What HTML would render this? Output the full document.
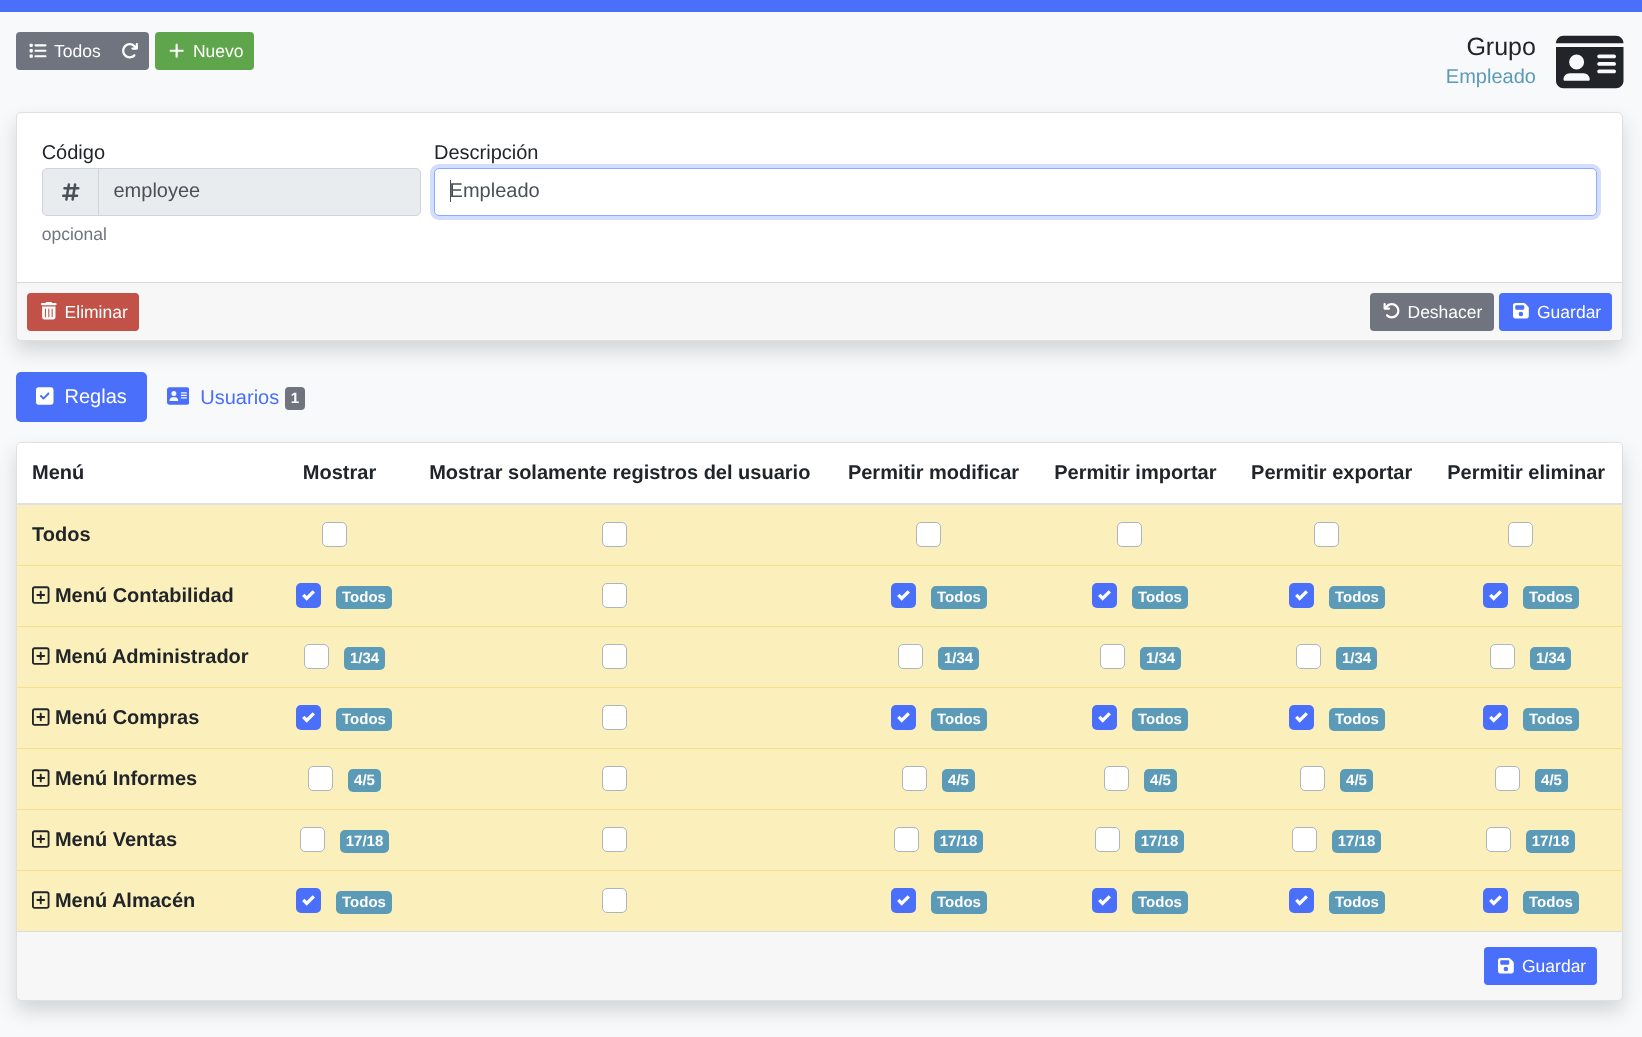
<!DOCTYPE html>
<html><head><meta charset="utf-8"><title>Grupo</title>
<style>
html,body{margin:0;padding:0}
body{width:1642px;height:1037px;position:relative;overflow:hidden;background:#f8f9fa;font-family:"Liberation Sans",sans-serif}
</style></head><body>
<div style="position:absolute;left:0px;top:0px;width:1642px;height:12px;background:#4a6ffa;border-radius:0px;"></div>
<div style="position:absolute;left:16px;top:32px;width:133px;height:38px;background:#6f747e;border-radius:4px;"></div>
<svg style="position:absolute;left:29.05px;top:42.06px;width:17.500px;height:17.5px" viewBox="0 0 512 512"><path fill="#fff" d="M40 48C26.7 48 16 58.7 16 72v48c0 13.3 10.7 24 24 24H88c13.3 0 24-10.7 24-24V72c0-13.3-10.7-24-24-24H40zM192 64c-17.7 0-32 14.3-32 32s14.3 32 32 32H480c17.7 0 32-14.3 32-32s-14.3-32-32-32H192zm0 160c-17.7 0-32 14.3-32 32s14.3 32 32 32H480c17.7 0 32-14.3 32-32s-14.3-32-32-32H192zm0 160c-17.7 0-32 14.3-32 32s14.3 32 32 32H480c17.7 0 32-14.3 32-32s-14.3-32-32-32H192zM16 232v48c0 13.3 10.7 24 24 24H88c13.3 0 24-10.7 24-24V232c0-13.3-10.7-24-24-24H40c-13.3 0-24 10.7-24 24zM40 368c-13.3 0-24 10.7-24 24v48c0 13.3 10.7 24 24 24H88c13.3 0 24-10.7 24-24V392c0-13.3-10.7-24-24-24H40z"/></svg>
<svg style="position:absolute;left:121.0px;top:42.0px;width:17.500px;height:17.5px" viewBox="0 0 512 512"><path fill="#fff" d="M386.3 160H336c-17.7 0-32 14.3-32 32s14.3 32 32 32H464c17.7 0 32-14.3 32-32V64c0-17.7-14.3-32-32-32s-32 14.3-32 32v51.2L414.4 97.6c-87.5-87.5-229.3-87.5-316.8 0s-87.5 229.3 0 316.8s229.3 87.5 316.8 0c12.5-12.5 12.5-32.8 0-45.3s-32.8-12.5-45.3 0c-62.5 62.5-163.8 62.5-226.3 0s-62.5-163.8 0-226.3s163.8-62.5 226.3 0L386.3 160z"/></svg>
<div style="position:absolute;left:155px;top:32px;width:99px;height:38px;background:#5fa54b;border-radius:4px;"></div>
<svg style="position:absolute;left:169.25px;top:42.2px;width:15.312px;height:17.5px" viewBox="0 0 448 512"><path fill="#fff" d="M256 80c0-17.7-14.3-32-32-32s-32 14.3-32 32V224H48c-17.7 0-32 14.3-32 32s14.3 32 32 32H192V432c0 17.7 14.3 32 32 32s32-14.3 32-32V288H400c17.7 0 32-14.3 32-32s-14.3-32-32-32H256V80z"/></svg>
<svg style="position:absolute;left:1556px;top:32.05px;width:67.500px;height:60px" viewBox="0 0 576 512"><path fill="#212529" d="M0 96l576 0c0-35.3-28.7-64-64-64H64C28.7 32 0 60.7 0 96zm0 32V416c0 35.3 28.7 64 64 64H512c35.3 0 64-28.7 64-64V128H0zM64 405.3c0-29.5 23.9-53.3 53.3-53.3H234.7c29.5 0 53.3 23.900 53.3 53.3c0 5.9-4.8 10.7-10.7 10.7H74.7c-5.9 0-10.7-4.8-10.7-10.7zM176 192a64 64 0 1 1 0 128 64 64 0 1 1 0-128zm176 16c0-8.8 7.2-16 16-16H496c8.8 0 16 7.2 16 16s-7.2 16-16 16H368c-8.8 0-16-7.2-16-16zm0 64c0-8.8 7.2-16 16-16H496c8.8 0 16 7.2 16 16s-7.2 16-16 16H368c-8.8 0-16-7.2-16-16zm0 64c0-8.8 7.2-16 16-16H496c8.8 0 16 7.2 16 16s-7.2 16-16 16H368c-8.8 0-16-7.2-16-16z"/></svg>
<div style="position:absolute;left:16px;top:112px;width:1605px;height:227px;background:#fff;border:1px solid #dfdfdf;border-radius:5px;box-shadow:0 10px 20px rgba(0,0,0,.15);overflow:hidden"><div style="position:absolute;left:0;top:169px;width:1605px;height:58px;background:#f7f7f7;border-top:1px solid #d8d8d8"></div></div>
<div style="position:absolute;left:42px;top:168px;width:377px;height:46px;background:#e9ecef;border-radius:5px;border:1px solid #ced4da"></div>
<div style="position:absolute;left:98px;top:169px;width:1px;height:46px;background:#ced4da;border-radius:0px;"></div>
<svg style="position:absolute;left:62.0px;top:181.85px;width:17.500px;height:20px" viewBox="0 0 448 512"><path fill="#495057" d="M181.3 32.4c17.4 2.9 29.2 19.4 26.3 36.8L197.8 128h95.1l11.5-69.3c2.9-17.4 19.4-29.2 36.8-26.3s29.2 19.4 26.3 36.8L357.8 128H416c17.7 0 32 14.3 32 32s-14.3 32-32 32H347.1L325.8 320H384c17.7 0 32 14.3 32 32s-14.3 32-32 32H315.1l-11.5 69.3c-2.9 17.4-19.4 29.2-36.8 26.3s-29.2-19.4-26.3-36.8l9.8-58.7H155.1l-11.5 69.3c-2.9 17.4-19.4 29.2-36.8 26.3s-29.2-19.4-26.3-36.8L90.2 384H32c-17.7 0-32-14.3-32-32s14.3-32 32-32H100.9l21.3-128H64c-17.7 0-32-14.3-32-32s14.3-32 32-32h68.9l11.5-69.3c2.9-17.4 19.4-29.2 36.8-26.3zM187.1 192L165.8 320h95.1l21.3-128H187.1z"/></svg>
<div style="position:absolute;left:430px;top:164px;width:1171px;height:56px;background:#d3ddfd;border-radius:9px;"></div>
<div style="position:absolute;left:434px;top:168px;width:1161px;height:46px;background:#fff;border-radius:5px;border:1px solid #8cadfb"></div>
<div style="position:absolute;left:450px;top:180px;width:1px;height:22px;background:#495057;border-radius:0px;"></div>
<div style="position:absolute;left:27px;top:293px;width:112px;height:38px;background:#c25148;border-radius:4px;"></div>
<svg style="position:absolute;left:41.05px;top:302px;width:15.600px;height:17.5px" viewBox="0 0 448 512" preserveAspectRatio="none"><path fill="#fff" d="M135.2 17.7C140.6 6.8 151.7 0 163.8 0H284.2c12.1 0 23.2 6.8 28.6 17.7L320 32h96c17.7 0 32 14.3 32 32s-14.3 32-32 32H32C14.3 96 0 81.7 0 64S14.3 32 32 32h96l7.2-14.3zM32 128H416V448c0 35.3-28.7 64-64 64H96c-35.3 0-64-28.7-64-64V128zm96 64c-8.8 0-16 7.2-16 16V432c0 8.8 7.2 16 16 16s16-7.2 16-16V208c0-8.8-7.2-16-16-16zm96 0c-8.8 0-16 7.2-16 16V432c0 8.8 7.2 16 16 16s16-7.2 16-16V208c0-8.8-7.2-16-16-16zm96 0c-8.8 0-16 7.2-16 16V432c0 8.8 7.2 16 16 16s16-7.2 16-16V208c0-8.8-7.2-16-16-16z"/></svg>
<div style="position:absolute;left:1370px;top:293px;width:124px;height:38px;background:#6f747e;border-radius:4px;"></div>
<svg style="position:absolute;left:1383.25px;top:301.9px;width:17.500px;height:17.5px" viewBox="0 0 512 512"><path fill="#fff" d="M125.7 160H176c17.7 0 32 14.3 32 32s-14.3 32-32 32H48c-17.7 0-32-14.3-32-32V64c0-17.7 14.3-32 32-32s32 14.3 32 32v51.2L97.6 97.6c87.5-87.5 229.3-87.5 316.8 0s87.5 229.3 0 316.8s-229.3 87.5-316.8 0c-12.5-12.5-12.5-32.8 0-45.3s32.8-12.5 45.3 0c62.5 62.5 163.8 62.5 226.3 0s62.5-163.8 0-226.3s-163.8-62.5-226.3 0L125.7 160z"/></svg>
<div style="position:absolute;left:1499px;top:293px;width:113px;height:38px;background:#4a6ffa;border-radius:4px;"></div>
<svg style="position:absolute;left:1513px;top:301.7px;width:15.800px;height:17.5px" viewBox="0 0 448 512" preserveAspectRatio="none"><path fill="#fff" d="M64 32C28.7 32 0 60.7 0 96V416c0 35.3 28.7 64 64 64H384c35.3 0 64-28.7 64-64V173.3c0-17-6.7-33.3-18.7-45.3L352 50.7C340 38.7 323.7 32 306.7 32H64zm0 96c0-17.7 14.3-32 32-32H288c17.7 0 32 14.3 32 32v64c0 17.7-14.3 32-32 32H96c-17.7 0-32-14.3-32-32V128zM224 288a64 64 0 1 1 0 128 64 64 0 1 1 0-128z"/></svg>
<div style="position:absolute;left:16px;top:372px;width:131px;height:50px;background:#4a6ffa;border-radius:5px;"></div>
<svg style="position:absolute;left:36px;top:385.75px;width:17.500px;height:20px" viewBox="0 0 448 512"><path fill="#fff" d="M64 32C28.7 32 0 60.7 0 96V416c0 35.3 28.7 64 64 64H384c35.3 0 64-28.7 64-64V96c0-35.3-28.7-64-64-64H64zM337 209L209 337c-9.4 9.4-24.6 9.4-33.9 0l-64-64c-9.4-9.4-9.4-24.6 0-33.9s24.6-9.4 33.9 0l47 47L303 175c9.4-9.4 24.6-9.4 33.9 0s9.4 24.6 0 33.9z"/></svg>
<svg style="position:absolute;left:166.7px;top:385.75px;width:22.500px;height:20px" viewBox="0 0 576 512"><path fill="#4a6ffa" d="M64 32C28.7 32 0 60.7 0 96V416c0 35.3 28.7 64 64 64H512c35.3 0 64-28.7 64-64V96c0-35.3-28.7-64-64-64H64zm80 256h64c44.2 0 80 35.8 80 80c0 8.8-7.2 16-16 16H80c-8.8 0-16-7.2-16-16c0-44.2 35.8-80 80-80zm-32-96a64 64 0 1 1 128 0 64 64 0 1 1 -128 0zm256-32H496c8.8 0 16 7.2 16 16s-7.2 16-16 16H368c-8.8 0-16-7.2-16-16s7.2-16 16-16zm0 64H496c8.8 0 16 7.2 16 16s-7.2 16-16 16H368c-8.8 0-16-7.2-16-16s7.2-16 16-16zm0 64H496c8.8 0 16 7.2 16 16s-7.2 16-16 16H368c-8.8 0-16-7.2-16-16s7.2-16 16-16z"/></svg>
<div style="position:absolute;left:285px;top:387px;width:20px;height:23px;background:#6f747e;border-radius:4px;"></div>
<div style="position:absolute;left:16px;top:442px;width:1605px;height:557px;background:#f7f7f7;border:1px solid #dfdfdf;border-radius:5px;box-shadow:0 10px 20px rgba(0,0,0,.15);overflow:hidden"><div style="position:absolute;left:0;top:0;width:1605px;height:60px;background:#fff;border-bottom:2px solid #dee2e6"></div><div style="position:absolute;left:0;top:62px;width:1605px;height:60px;background:#fbf0bc;border-bottom:1px solid #f5e08a"></div><div style="position:absolute;left:0;top:123px;width:1605px;height:60px;background:#fbf0bc;border-bottom:1px solid #f5e08a"></div><div style="position:absolute;left:0;top:184px;width:1605px;height:60px;background:#fbf0bc;border-bottom:1px solid #f5e08a"></div><div style="position:absolute;left:0;top:245px;width:1605px;height:60px;background:#fbf0bc;border-bottom:1px solid #f5e08a"></div><div style="position:absolute;left:0;top:306px;width:1605px;height:60px;background:#fbf0bc;border-bottom:1px solid #f5e08a"></div><div style="position:absolute;left:0;top:367px;width:1605px;height:60px;background:#fbf0bc;border-bottom:1px solid #f5e08a"></div><div style="position:absolute;left:0;top:428px;width:1605px;height:60px;background:#fbf0bc;border-bottom:1px solid #d9dadd"></div></div>
<div style="position:absolute;left:322.00px;top:522.00px;width:23px;height:23px;background:#fff;border:1px solid #adb5bd;border-radius:5px"></div>
<div style="position:absolute;left:602.00px;top:522.00px;width:23px;height:23px;background:#fff;border:1px solid #adb5bd;border-radius:5px"></div>
<div style="position:absolute;left:916.00px;top:522.00px;width:23px;height:23px;background:#fff;border:1px solid #adb5bd;border-radius:5px"></div>
<div style="position:absolute;left:1117.00px;top:522.00px;width:23px;height:23px;background:#fff;border:1px solid #adb5bd;border-radius:5px"></div>
<div style="position:absolute;left:1314.00px;top:522.00px;width:23px;height:23px;background:#fff;border:1px solid #adb5bd;border-radius:5px"></div>
<div style="position:absolute;left:1508.00px;top:522.00px;width:23px;height:23px;background:#fff;border:1px solid #adb5bd;border-radius:5px"></div>
<svg style="position:absolute;left:32.2px;top:584.55px;width:17.500px;height:20px" viewBox="0 0 448 512"><path fill="#212529" d="M64 80c-8.8 0-16 7.2-16 16V416c0 8.8 7.2 16 16 16H384c8.8 0 16-7.2 16-16V96c0-8.8-7.2-16-16-16H64zM0 96C0 60.7 28.7 32 64 32H384c35.3 0 64 28.7 64 64V416c0 35.3-28.7 64-64 64H64c-35.3 0-64-28.7-64-64V96zM200 344V280H136c-13.3 0-24-10.7-24-24s10.7-24 24-24h64V168c0-13.3 10.7-24 24-24s24 10.7 24 24v64h64c13.3 0 24 10.7 24 24s-10.7 24-24 24H248v64c0 13.3-10.7 24-24 24s-24-10.7-24-24z"/></svg>
<div style="position:absolute;left:296.00px;top:583.00px;width:25px;height:25px;background:#4a6ffa;border-radius:5px"><svg style="position:absolute;left:0;top:0" width="25" height="25" viewBox="0 0 25 25"><path d="M7.3 11.8L10.7 15.4L17.8 8.3" fill="none" stroke="#fff" stroke-width="3.3"/></svg></div>
<div style="position:absolute;left:336.00px;top:586.00px;width:56.00px;height:22.5px;background:#5b9bb8;border-radius:5px"></div>
<div style="position:absolute;left:602.00px;top:583.00px;width:23px;height:23px;background:#fff;border:1px solid #adb5bd;border-radius:5px"></div>
<div style="position:absolute;left:891.00px;top:583.00px;width:25px;height:25px;background:#4a6ffa;border-radius:5px"><svg style="position:absolute;left:0;top:0" width="25" height="25" viewBox="0 0 25 25"><path d="M7.3 11.8L10.7 15.4L17.8 8.3" fill="none" stroke="#fff" stroke-width="3.3"/></svg></div>
<div style="position:absolute;left:931.00px;top:586.00px;width:56.00px;height:22.5px;background:#5b9bb8;border-radius:5px"></div>
<div style="position:absolute;left:1092.00px;top:583.00px;width:25px;height:25px;background:#4a6ffa;border-radius:5px"><svg style="position:absolute;left:0;top:0" width="25" height="25" viewBox="0 0 25 25"><path d="M7.3 11.8L10.7 15.4L17.8 8.3" fill="none" stroke="#fff" stroke-width="3.3"/></svg></div>
<div style="position:absolute;left:1132.00px;top:586.00px;width:56.00px;height:22.5px;background:#5b9bb8;border-radius:5px"></div>
<div style="position:absolute;left:1289.00px;top:583.00px;width:25px;height:25px;background:#4a6ffa;border-radius:5px"><svg style="position:absolute;left:0;top:0" width="25" height="25" viewBox="0 0 25 25"><path d="M7.3 11.8L10.7 15.4L17.8 8.3" fill="none" stroke="#fff" stroke-width="3.3"/></svg></div>
<div style="position:absolute;left:1329.00px;top:586.00px;width:56.00px;height:22.5px;background:#5b9bb8;border-radius:5px"></div>
<div style="position:absolute;left:1483.00px;top:583.00px;width:25px;height:25px;background:#4a6ffa;border-radius:5px"><svg style="position:absolute;left:0;top:0" width="25" height="25" viewBox="0 0 25 25"><path d="M7.3 11.8L10.7 15.4L17.8 8.3" fill="none" stroke="#fff" stroke-width="3.3"/></svg></div>
<div style="position:absolute;left:1523.00px;top:586.00px;width:56.00px;height:22.5px;background:#5b9bb8;border-radius:5px"></div>
<svg style="position:absolute;left:32.2px;top:645.55px;width:17.500px;height:20px" viewBox="0 0 448 512"><path fill="#212529" d="M64 80c-8.8 0-16 7.2-16 16V416c0 8.8 7.2 16 16 16H384c8.8 0 16-7.2 16-16V96c0-8.8-7.2-16-16-16H64zM0 96C0 60.7 28.7 32 64 32H384c35.3 0 64 28.7 64 64V416c0 35.3-28.7 64-64 64H64c-35.3 0-64-28.7-64-64V96zM200 344V280H136c-13.3 0-24-10.7-24-24s10.7-24 24-24h64V168c0-13.3 10.7-24 24-24s24 10.7 24 24v64h64c13.3 0 24 10.7 24 24s-10.7 24-24 24H248v64c0 13.3-10.7 24-24 24s-24-10.7-24-24z"/></svg>
<div style="position:absolute;left:304.00px;top:644.00px;width:23px;height:23px;background:#fff;border:1px solid #adb5bd;border-radius:5px"></div>
<div style="position:absolute;left:344.00px;top:647.00px;width:41.00px;height:22.5px;background:#5b9bb8;border-radius:5px"></div>
<div style="position:absolute;left:602.00px;top:644.00px;width:23px;height:23px;background:#fff;border:1px solid #adb5bd;border-radius:5px"></div>
<div style="position:absolute;left:898.00px;top:644.00px;width:23px;height:23px;background:#fff;border:1px solid #adb5bd;border-radius:5px"></div>
<div style="position:absolute;left:938.00px;top:647.00px;width:41.00px;height:22.5px;background:#5b9bb8;border-radius:5px"></div>
<div style="position:absolute;left:1100.00px;top:644.00px;width:23px;height:23px;background:#fff;border:1px solid #adb5bd;border-radius:5px"></div>
<div style="position:absolute;left:1140.00px;top:647.00px;width:41.00px;height:22.5px;background:#5b9bb8;border-radius:5px"></div>
<div style="position:absolute;left:1296.00px;top:644.00px;width:23px;height:23px;background:#fff;border:1px solid #adb5bd;border-radius:5px"></div>
<div style="position:absolute;left:1336.00px;top:647.00px;width:41.00px;height:22.5px;background:#5b9bb8;border-radius:5px"></div>
<div style="position:absolute;left:1490.00px;top:644.00px;width:23px;height:23px;background:#fff;border:1px solid #adb5bd;border-radius:5px"></div>
<div style="position:absolute;left:1530.00px;top:647.00px;width:41.00px;height:22.5px;background:#5b9bb8;border-radius:5px"></div>
<svg style="position:absolute;left:32.2px;top:706.55px;width:17.500px;height:20px" viewBox="0 0 448 512"><path fill="#212529" d="M64 80c-8.8 0-16 7.2-16 16V416c0 8.8 7.2 16 16 16H384c8.8 0 16-7.2 16-16V96c0-8.8-7.2-16-16-16H64zM0 96C0 60.7 28.7 32 64 32H384c35.3 0 64 28.7 64 64V416c0 35.3-28.7 64-64 64H64c-35.3 0-64-28.7-64-64V96zM200 344V280H136c-13.3 0-24-10.7-24-24s10.7-24 24-24h64V168c0-13.3 10.7-24 24-24s24 10.7 24 24v64h64c13.3 0 24 10.7 24 24s-10.7 24-24 24H248v64c0 13.3-10.7 24-24 24s-24-10.7-24-24z"/></svg>
<div style="position:absolute;left:296.00px;top:705.00px;width:25px;height:25px;background:#4a6ffa;border-radius:5px"><svg style="position:absolute;left:0;top:0" width="25" height="25" viewBox="0 0 25 25"><path d="M7.3 11.8L10.7 15.4L17.8 8.3" fill="none" stroke="#fff" stroke-width="3.3"/></svg></div>
<div style="position:absolute;left:336.00px;top:708.00px;width:56.00px;height:22.5px;background:#5b9bb8;border-radius:5px"></div>
<div style="position:absolute;left:602.00px;top:705.00px;width:23px;height:23px;background:#fff;border:1px solid #adb5bd;border-radius:5px"></div>
<div style="position:absolute;left:891.00px;top:705.00px;width:25px;height:25px;background:#4a6ffa;border-radius:5px"><svg style="position:absolute;left:0;top:0" width="25" height="25" viewBox="0 0 25 25"><path d="M7.3 11.8L10.7 15.4L17.8 8.3" fill="none" stroke="#fff" stroke-width="3.3"/></svg></div>
<div style="position:absolute;left:931.00px;top:708.00px;width:56.00px;height:22.5px;background:#5b9bb8;border-radius:5px"></div>
<div style="position:absolute;left:1092.00px;top:705.00px;width:25px;height:25px;background:#4a6ffa;border-radius:5px"><svg style="position:absolute;left:0;top:0" width="25" height="25" viewBox="0 0 25 25"><path d="M7.3 11.8L10.7 15.4L17.8 8.3" fill="none" stroke="#fff" stroke-width="3.3"/></svg></div>
<div style="position:absolute;left:1132.00px;top:708.00px;width:56.00px;height:22.5px;background:#5b9bb8;border-radius:5px"></div>
<div style="position:absolute;left:1289.00px;top:705.00px;width:25px;height:25px;background:#4a6ffa;border-radius:5px"><svg style="position:absolute;left:0;top:0" width="25" height="25" viewBox="0 0 25 25"><path d="M7.3 11.8L10.7 15.4L17.8 8.3" fill="none" stroke="#fff" stroke-width="3.3"/></svg></div>
<div style="position:absolute;left:1329.00px;top:708.00px;width:56.00px;height:22.5px;background:#5b9bb8;border-radius:5px"></div>
<div style="position:absolute;left:1483.00px;top:705.00px;width:25px;height:25px;background:#4a6ffa;border-radius:5px"><svg style="position:absolute;left:0;top:0" width="25" height="25" viewBox="0 0 25 25"><path d="M7.3 11.8L10.7 15.4L17.8 8.3" fill="none" stroke="#fff" stroke-width="3.3"/></svg></div>
<div style="position:absolute;left:1523.00px;top:708.00px;width:56.00px;height:22.5px;background:#5b9bb8;border-radius:5px"></div>
<svg style="position:absolute;left:32.2px;top:767.55px;width:17.500px;height:20px" viewBox="0 0 448 512"><path fill="#212529" d="M64 80c-8.8 0-16 7.2-16 16V416c0 8.8 7.2 16 16 16H384c8.8 0 16-7.2 16-16V96c0-8.8-7.2-16-16-16H64zM0 96C0 60.7 28.7 32 64 32H384c35.3 0 64 28.7 64 64V416c0 35.3-28.7 64-64 64H64c-35.3 0-64-28.7-64-64V96zM200 344V280H136c-13.3 0-24-10.7-24-24s10.7-24 24-24h64V168c0-13.3 10.7-24 24-24s24 10.7 24 24v64h64c13.3 0 24 10.7 24 24s-10.7 24-24 24H248v64c0 13.3-10.7 24-24 24s-24-10.7-24-24z"/></svg>
<div style="position:absolute;left:308.00px;top:766.00px;width:23px;height:23px;background:#fff;border:1px solid #adb5bd;border-radius:5px"></div>
<div style="position:absolute;left:348.00px;top:769.00px;width:33.00px;height:22.5px;background:#5b9bb8;border-radius:5px"></div>
<div style="position:absolute;left:602.00px;top:766.00px;width:23px;height:23px;background:#fff;border:1px solid #adb5bd;border-radius:5px"></div>
<div style="position:absolute;left:902.00px;top:766.00px;width:23px;height:23px;background:#fff;border:1px solid #adb5bd;border-radius:5px"></div>
<div style="position:absolute;left:942.00px;top:769.00px;width:33.00px;height:22.5px;background:#5b9bb8;border-radius:5px"></div>
<div style="position:absolute;left:1104.00px;top:766.00px;width:23px;height:23px;background:#fff;border:1px solid #adb5bd;border-radius:5px"></div>
<div style="position:absolute;left:1144.00px;top:769.00px;width:33.00px;height:22.5px;background:#5b9bb8;border-radius:5px"></div>
<div style="position:absolute;left:1300.00px;top:766.00px;width:23px;height:23px;background:#fff;border:1px solid #adb5bd;border-radius:5px"></div>
<div style="position:absolute;left:1340.00px;top:769.00px;width:33.00px;height:22.5px;background:#5b9bb8;border-radius:5px"></div>
<div style="position:absolute;left:1495.00px;top:766.00px;width:23px;height:23px;background:#fff;border:1px solid #adb5bd;border-radius:5px"></div>
<div style="position:absolute;left:1535.00px;top:769.00px;width:33.00px;height:22.5px;background:#5b9bb8;border-radius:5px"></div>
<svg style="position:absolute;left:32.2px;top:828.55px;width:17.500px;height:20px" viewBox="0 0 448 512"><path fill="#212529" d="M64 80c-8.8 0-16 7.2-16 16V416c0 8.8 7.2 16 16 16H384c8.8 0 16-7.2 16-16V96c0-8.8-7.2-16-16-16H64zM0 96C0 60.7 28.7 32 64 32H384c35.3 0 64 28.7 64 64V416c0 35.3-28.7 64-64 64H64c-35.3 0-64-28.7-64-64V96zM200 344V280H136c-13.3 0-24-10.7-24-24s10.7-24 24-24h64V168c0-13.3 10.7-24 24-24s24 10.7 24 24v64h64c13.3 0 24 10.7 24 24s-10.7 24-24 24H248v64c0 13.3-10.7 24-24 24s-24-10.7-24-24z"/></svg>
<div style="position:absolute;left:300.00px;top:827.00px;width:23px;height:23px;background:#fff;border:1px solid #adb5bd;border-radius:5px"></div>
<div style="position:absolute;left:340.00px;top:830.00px;width:49.00px;height:22.5px;background:#5b9bb8;border-radius:5px"></div>
<div style="position:absolute;left:602.00px;top:827.00px;width:23px;height:23px;background:#fff;border:1px solid #adb5bd;border-radius:5px"></div>
<div style="position:absolute;left:894.00px;top:827.00px;width:23px;height:23px;background:#fff;border:1px solid #adb5bd;border-radius:5px"></div>
<div style="position:absolute;left:934.00px;top:830.00px;width:49.00px;height:22.5px;background:#5b9bb8;border-radius:5px"></div>
<div style="position:absolute;left:1095.00px;top:827.00px;width:23px;height:23px;background:#fff;border:1px solid #adb5bd;border-radius:5px"></div>
<div style="position:absolute;left:1135.00px;top:830.00px;width:49.00px;height:22.5px;background:#5b9bb8;border-radius:5px"></div>
<div style="position:absolute;left:1292.00px;top:827.00px;width:23px;height:23px;background:#fff;border:1px solid #adb5bd;border-radius:5px"></div>
<div style="position:absolute;left:1332.00px;top:830.00px;width:49.00px;height:22.5px;background:#5b9bb8;border-radius:5px"></div>
<div style="position:absolute;left:1486.00px;top:827.00px;width:23px;height:23px;background:#fff;border:1px solid #adb5bd;border-radius:5px"></div>
<div style="position:absolute;left:1526.00px;top:830.00px;width:49.00px;height:22.5px;background:#5b9bb8;border-radius:5px"></div>
<svg style="position:absolute;left:32.2px;top:889.55px;width:17.500px;height:20px" viewBox="0 0 448 512"><path fill="#212529" d="M64 80c-8.8 0-16 7.2-16 16V416c0 8.8 7.2 16 16 16H384c8.8 0 16-7.2 16-16V96c0-8.8-7.2-16-16-16H64zM0 96C0 60.7 28.7 32 64 32H384c35.3 0 64 28.7 64 64V416c0 35.3-28.7 64-64 64H64c-35.3 0-64-28.7-64-64V96zM200 344V280H136c-13.3 0-24-10.7-24-24s10.7-24 24-24h64V168c0-13.3 10.7-24 24-24s24 10.7 24 24v64h64c13.3 0 24 10.7 24 24s-10.7 24-24 24H248v64c0 13.3-10.7 24-24 24s-24-10.7-24-24z"/></svg>
<div style="position:absolute;left:296.00px;top:888.00px;width:25px;height:25px;background:#4a6ffa;border-radius:5px"><svg style="position:absolute;left:0;top:0" width="25" height="25" viewBox="0 0 25 25"><path d="M7.3 11.8L10.7 15.4L17.8 8.3" fill="none" stroke="#fff" stroke-width="3.3"/></svg></div>
<div style="position:absolute;left:336.00px;top:891.00px;width:56.00px;height:22.5px;background:#5b9bb8;border-radius:5px"></div>
<div style="position:absolute;left:602.00px;top:888.00px;width:23px;height:23px;background:#fff;border:1px solid #adb5bd;border-radius:5px"></div>
<div style="position:absolute;left:891.00px;top:888.00px;width:25px;height:25px;background:#4a6ffa;border-radius:5px"><svg style="position:absolute;left:0;top:0" width="25" height="25" viewBox="0 0 25 25"><path d="M7.3 11.8L10.7 15.4L17.8 8.3" fill="none" stroke="#fff" stroke-width="3.3"/></svg></div>
<div style="position:absolute;left:931.00px;top:891.00px;width:56.00px;height:22.5px;background:#5b9bb8;border-radius:5px"></div>
<div style="position:absolute;left:1092.00px;top:888.00px;width:25px;height:25px;background:#4a6ffa;border-radius:5px"><svg style="position:absolute;left:0;top:0" width="25" height="25" viewBox="0 0 25 25"><path d="M7.3 11.8L10.7 15.4L17.8 8.3" fill="none" stroke="#fff" stroke-width="3.3"/></svg></div>
<div style="position:absolute;left:1132.00px;top:891.00px;width:56.00px;height:22.5px;background:#5b9bb8;border-radius:5px"></div>
<div style="position:absolute;left:1289.00px;top:888.00px;width:25px;height:25px;background:#4a6ffa;border-radius:5px"><svg style="position:absolute;left:0;top:0" width="25" height="25" viewBox="0 0 25 25"><path d="M7.3 11.8L10.7 15.4L17.8 8.3" fill="none" stroke="#fff" stroke-width="3.3"/></svg></div>
<div style="position:absolute;left:1329.00px;top:891.00px;width:56.00px;height:22.5px;background:#5b9bb8;border-radius:5px"></div>
<div style="position:absolute;left:1483.00px;top:888.00px;width:25px;height:25px;background:#4a6ffa;border-radius:5px"><svg style="position:absolute;left:0;top:0" width="25" height="25" viewBox="0 0 25 25"><path d="M7.3 11.8L10.7 15.4L17.8 8.3" fill="none" stroke="#fff" stroke-width="3.3"/></svg></div>
<div style="position:absolute;left:1523.00px;top:891.00px;width:56.00px;height:22.5px;background:#5b9bb8;border-radius:5px"></div>
<div style="position:absolute;left:1484px;top:947px;width:113px;height:38px;background:#4a6ffa;border-radius:4px;"></div>
<svg style="position:absolute;left:1498px;top:956.7px;width:15.800px;height:17.5px" viewBox="0 0 448 512" preserveAspectRatio="none"><path fill="#fff" d="M64 32C28.7 32 0 60.7 0 96V416c0 35.3 28.7 64 64 64H384c35.3 0 64-28.7 64-64V173.3c0-17-6.7-33.3-18.7-45.3L352 50.7C340 38.7 323.7 32 306.7 32H64zm0 96c0-17.7 14.3-32 32-32H288c17.7 0 32 14.3 32 32v64c0 17.7-14.3 32-32 32H96c-17.7 0-32-14.3-32-32V128zM224 288a64 64 0 1 1 0 128 64 64 0 1 1 0-128z"/></svg>
<div style="position:absolute;left:0;top:0;width:1642px;height:1037px;will-change:transform;text-rendering:geometricPrecision">
<div style="position:absolute;left:54px;top:37.81px;font-size:17.5px;line-height:26.25px;color:#fff;font-weight:400;white-space:nowrap;">Todos</div>
<div style="position:absolute;left:192.9px;top:37.81px;font-size:17.5px;line-height:26.25px;color:#fff;font-weight:400;white-space:nowrap;">Nuevo</div>
<div style="position:absolute;right:106.09999999999991px;top:28.55px;font-size:25px;line-height:37.5px;color:#212529;font-weight:400;white-space:nowrap;">Grupo</div>
<div style="position:absolute;right:106.09999999999991px;top:61.83px;font-size:20px;line-height:30.0px;color:#5b9bb8;font-weight:400;white-space:nowrap;">Empleado</div>
<div style="position:absolute;left:41.65px;top:137.92px;font-size:20px;line-height:30.0px;color:#212529;font-weight:400;white-space:nowrap;">Código</div>
<div style="position:absolute;left:434px;top:137.92px;font-size:20px;line-height:30.0px;color:#212529;font-weight:400;white-space:nowrap;">Descripción</div>
<div style="position:absolute;left:113.5px;top:176.37px;font-size:20px;line-height:30.0px;color:#495057;font-weight:400;white-space:nowrap;">employee</div>
<div style="position:absolute;left:41.7px;top:220.61px;font-size:17.5px;line-height:26.25px;color:#6f747e;font-weight:400;white-space:nowrap;">opcional</div>
<div style="position:absolute;left:449.6px;top:175.62px;font-size:20px;line-height:30.0px;color:#495057;font-weight:400;white-space:nowrap;">Empleado</div>
<div style="position:absolute;left:64.6px;top:299.01px;font-size:17.5px;line-height:26.25px;color:#fff;font-weight:400;white-space:nowrap;">Eliminar</div>
<div style="position:absolute;left:1407.5px;top:299.01px;font-size:17.5px;line-height:26.25px;color:#fff;font-weight:400;white-space:nowrap;">Deshacer</div>
<div style="position:absolute;left:1537px;top:299.01px;font-size:17.5px;line-height:26.25px;color:#fff;font-weight:400;white-space:nowrap;">Guardar</div>
<div style="position:absolute;left:64.5px;top:382.47px;font-size:20px;line-height:30.0px;color:#fff;font-weight:400;white-space:nowrap;">Reglas</div>
<div style="position:absolute;left:200.3px;top:382.52px;font-size:20px;line-height:30.0px;color:#4a6ffa;font-weight:400;white-space:nowrap;">Usuarios</div>
<div style="position:absolute;left:290.8px;top:387.55px;font-size:15px;line-height:22.5px;color:#fff;font-weight:700;white-space:nowrap;">1</div>
<div style="position:absolute;left:32px;top:457.71px;font-size:20px;line-height:30.0px;color:#212529;font-weight:700;white-space:nowrap;">Menú</div>
<div style="position:absolute;left:39.5px;width:600px;text-align:center;top:457.71px;font-size:20px;line-height:30px;font-weight:700;color:#212529;white-space:nowrap">Mostrar</div>
<div style="position:absolute;left:319.75px;width:600px;text-align:center;top:457.71px;font-size:20px;line-height:30px;font-weight:700;color:#212529;white-space:nowrap">Mostrar solamente registros del usuario</div>
<div style="position:absolute;left:633.5px;width:600px;text-align:center;top:457.71px;font-size:20px;line-height:30px;font-weight:700;color:#212529;white-space:nowrap">Permitir modificar</div>
<div style="position:absolute;left:835.3499999999999px;width:600px;text-align:center;top:457.71px;font-size:20px;line-height:30px;font-weight:700;color:#212529;white-space:nowrap">Permitir importar</div>
<div style="position:absolute;left:1031.65px;width:600px;text-align:center;top:457.71px;font-size:20px;line-height:30px;font-weight:700;color:#212529;white-space:nowrap">Permitir exportar</div>
<div style="position:absolute;left:1226.15px;width:600px;text-align:center;top:457.71px;font-size:20px;line-height:30px;font-weight:700;color:#212529;white-space:nowrap">Permitir eliminar</div>
<div style="position:absolute;left:32px;top:519.62px;font-size:20px;line-height:30.0px;color:#212529;font-weight:700;white-space:nowrap;">Todos</div>
<div style="position:absolute;left:54.9px;top:580.70px;font-size:20px;line-height:30.0px;color:#212529;font-weight:700;white-space:nowrap;">Menú Contabilidad</div>
<div style="position:absolute;left:336.00px;top:586.00px;width:56.00px;text-align:center;color:#fff;font-size:15px;font-weight:700;line-height:22.5px;padding-top:1.2px;white-space:nowrap">Todos</div>
<div style="position:absolute;left:931.00px;top:586.00px;width:56.00px;text-align:center;color:#fff;font-size:15px;font-weight:700;line-height:22.5px;padding-top:1.2px;white-space:nowrap">Todos</div>
<div style="position:absolute;left:1132.00px;top:586.00px;width:56.00px;text-align:center;color:#fff;font-size:15px;font-weight:700;line-height:22.5px;padding-top:1.2px;white-space:nowrap">Todos</div>
<div style="position:absolute;left:1329.00px;top:586.00px;width:56.00px;text-align:center;color:#fff;font-size:15px;font-weight:700;line-height:22.5px;padding-top:1.2px;white-space:nowrap">Todos</div>
<div style="position:absolute;left:1523.00px;top:586.00px;width:56.00px;text-align:center;color:#fff;font-size:15px;font-weight:700;line-height:22.5px;padding-top:1.2px;white-space:nowrap">Todos</div>
<div style="position:absolute;left:54.9px;top:641.70px;font-size:20px;line-height:30.0px;color:#212529;font-weight:700;white-space:nowrap;">Menú Administrador</div>
<div style="position:absolute;left:344.00px;top:647.00px;width:41.00px;text-align:center;color:#fff;font-size:15px;font-weight:700;line-height:22.5px;padding-top:1.2px;white-space:nowrap">1/34</div>
<div style="position:absolute;left:938.00px;top:647.00px;width:41.00px;text-align:center;color:#fff;font-size:15px;font-weight:700;line-height:22.5px;padding-top:1.2px;white-space:nowrap">1/34</div>
<div style="position:absolute;left:1140.00px;top:647.00px;width:41.00px;text-align:center;color:#fff;font-size:15px;font-weight:700;line-height:22.5px;padding-top:1.2px;white-space:nowrap">1/34</div>
<div style="position:absolute;left:1336.00px;top:647.00px;width:41.00px;text-align:center;color:#fff;font-size:15px;font-weight:700;line-height:22.5px;padding-top:1.2px;white-space:nowrap">1/34</div>
<div style="position:absolute;left:1530.00px;top:647.00px;width:41.00px;text-align:center;color:#fff;font-size:15px;font-weight:700;line-height:22.5px;padding-top:1.2px;white-space:nowrap">1/34</div>
<div style="position:absolute;left:54.9px;top:702.70px;font-size:20px;line-height:30.0px;color:#212529;font-weight:700;white-space:nowrap;">Menú Compras</div>
<div style="position:absolute;left:336.00px;top:708.00px;width:56.00px;text-align:center;color:#fff;font-size:15px;font-weight:700;line-height:22.5px;padding-top:1.2px;white-space:nowrap">Todos</div>
<div style="position:absolute;left:931.00px;top:708.00px;width:56.00px;text-align:center;color:#fff;font-size:15px;font-weight:700;line-height:22.5px;padding-top:1.2px;white-space:nowrap">Todos</div>
<div style="position:absolute;left:1132.00px;top:708.00px;width:56.00px;text-align:center;color:#fff;font-size:15px;font-weight:700;line-height:22.5px;padding-top:1.2px;white-space:nowrap">Todos</div>
<div style="position:absolute;left:1329.00px;top:708.00px;width:56.00px;text-align:center;color:#fff;font-size:15px;font-weight:700;line-height:22.5px;padding-top:1.2px;white-space:nowrap">Todos</div>
<div style="position:absolute;left:1523.00px;top:708.00px;width:56.00px;text-align:center;color:#fff;font-size:15px;font-weight:700;line-height:22.5px;padding-top:1.2px;white-space:nowrap">Todos</div>
<div style="position:absolute;left:54.9px;top:763.70px;font-size:20px;line-height:30.0px;color:#212529;font-weight:700;white-space:nowrap;">Menú Informes</div>
<div style="position:absolute;left:348.00px;top:769.00px;width:33.00px;text-align:center;color:#fff;font-size:15px;font-weight:700;line-height:22.5px;padding-top:1.2px;white-space:nowrap">4/5</div>
<div style="position:absolute;left:942.00px;top:769.00px;width:33.00px;text-align:center;color:#fff;font-size:15px;font-weight:700;line-height:22.5px;padding-top:1.2px;white-space:nowrap">4/5</div>
<div style="position:absolute;left:1144.00px;top:769.00px;width:33.00px;text-align:center;color:#fff;font-size:15px;font-weight:700;line-height:22.5px;padding-top:1.2px;white-space:nowrap">4/5</div>
<div style="position:absolute;left:1340.00px;top:769.00px;width:33.00px;text-align:center;color:#fff;font-size:15px;font-weight:700;line-height:22.5px;padding-top:1.2px;white-space:nowrap">4/5</div>
<div style="position:absolute;left:1535.00px;top:769.00px;width:33.00px;text-align:center;color:#fff;font-size:15px;font-weight:700;line-height:22.5px;padding-top:1.2px;white-space:nowrap">4/5</div>
<div style="position:absolute;left:54.9px;top:824.70px;font-size:20px;line-height:30.0px;color:#212529;font-weight:700;white-space:nowrap;">Menú Ventas</div>
<div style="position:absolute;left:340.00px;top:830.00px;width:49.00px;text-align:center;color:#fff;font-size:15px;font-weight:700;line-height:22.5px;padding-top:1.2px;white-space:nowrap">17/18</div>
<div style="position:absolute;left:934.00px;top:830.00px;width:49.00px;text-align:center;color:#fff;font-size:15px;font-weight:700;line-height:22.5px;padding-top:1.2px;white-space:nowrap">17/18</div>
<div style="position:absolute;left:1135.00px;top:830.00px;width:49.00px;text-align:center;color:#fff;font-size:15px;font-weight:700;line-height:22.5px;padding-top:1.2px;white-space:nowrap">17/18</div>
<div style="position:absolute;left:1332.00px;top:830.00px;width:49.00px;text-align:center;color:#fff;font-size:15px;font-weight:700;line-height:22.5px;padding-top:1.2px;white-space:nowrap">17/18</div>
<div style="position:absolute;left:1526.00px;top:830.00px;width:49.00px;text-align:center;color:#fff;font-size:15px;font-weight:700;line-height:22.5px;padding-top:1.2px;white-space:nowrap">17/18</div>
<div style="position:absolute;left:54.9px;top:885.70px;font-size:20px;line-height:30.0px;color:#212529;font-weight:700;white-space:nowrap;">Menú Almacén</div>
<div style="position:absolute;left:336.00px;top:891.00px;width:56.00px;text-align:center;color:#fff;font-size:15px;font-weight:700;line-height:22.5px;padding-top:1.2px;white-space:nowrap">Todos</div>
<div style="position:absolute;left:931.00px;top:891.00px;width:56.00px;text-align:center;color:#fff;font-size:15px;font-weight:700;line-height:22.5px;padding-top:1.2px;white-space:nowrap">Todos</div>
<div style="position:absolute;left:1132.00px;top:891.00px;width:56.00px;text-align:center;color:#fff;font-size:15px;font-weight:700;line-height:22.5px;padding-top:1.2px;white-space:nowrap">Todos</div>
<div style="position:absolute;left:1329.00px;top:891.00px;width:56.00px;text-align:center;color:#fff;font-size:15px;font-weight:700;line-height:22.5px;padding-top:1.2px;white-space:nowrap">Todos</div>
<div style="position:absolute;left:1523.00px;top:891.00px;width:56.00px;text-align:center;color:#fff;font-size:15px;font-weight:700;line-height:22.5px;padding-top:1.2px;white-space:nowrap">Todos</div>
<div style="position:absolute;left:1522px;top:953.01px;font-size:17.5px;line-height:26.25px;color:#fff;font-weight:400;white-space:nowrap;">Guardar</div>
</div>
</body></html>
